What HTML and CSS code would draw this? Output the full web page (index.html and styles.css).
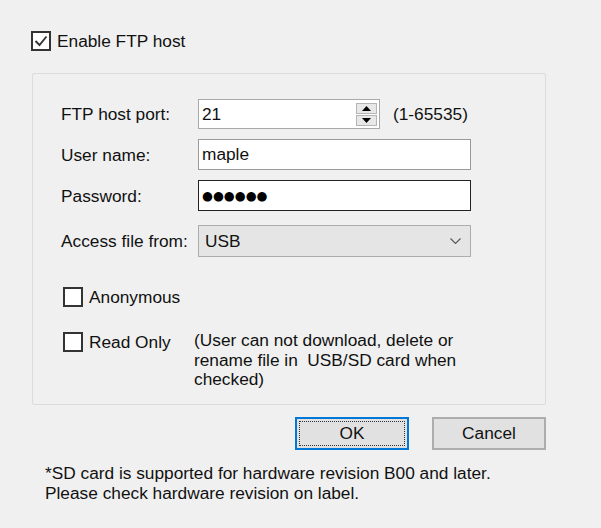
FILE: index.html
```html
<!DOCTYPE html>
<html>
<head>
<meta charset="utf-8">
<title>FTP host</title>
<link rel="stylesheet" href="styles.css">
</head>
<body>
<div class="dialog">
  <label class="check enable">
    <span class="box">
      <svg viewBox="0 0 16 16" width="16" height="16"><polyline points="2.5,8 6.5,12 13.5,3.5" fill="none" stroke="#333" stroke-width="1.9"/></svg>
    </span>
    <span class="check-text">Enable FTP host</span>
  </label>

  <div class="group">
    <div class="fields">
      <span class="label">FTP host port:</span>
      <div class="port-row">
        <div class="spin">
          <span class="value">21</span>
          <div class="spin-btns">
            <span class="spin-btn"><svg viewBox="0 0 9 5" width="9" height="5"><polygon points="0,5 4.5,0 9,5" fill="#000"/></svg></span>
            <span class="spin-btn"><svg viewBox="0 0 9 5" width="9" height="5"><polygon points="0,0 9,0 4.5,5" fill="#000"/></svg></span>
          </div>
        </div>
        <span class="range">(1-65535)</span>
      </div>

      <span class="label">User name:</span>
      <div class="input"><span class="value">maple</span></div>

      <span class="label">Password:</span>
      <div class="input focused"><span class="value dots">●●●●●●</span></div>

      <span class="label access-label">Access file from:</span>
      <div class="combo">
        <span class="value">USB</span>
        <svg class="chevron" viewBox="0 0 11 6" width="11" height="6"><polyline points="0.5,0.5 5.5,5.5 10.5,0.5" fill="none" stroke="#555" stroke-width="1.1"/></svg>
      </div>
    </div>

    <label class="check opt anon">
      <span class="box"></span>
      <span class="check-text">Anonymous</span>
    </label>

    <div class="opt readonly">
      <label class="check">
        <span class="box"></span>
        <span class="check-text">Read Only</span>
      </label>
      <p class="note">(User can not download, delete or<br>rename file in&nbsp; USB/SD card when<br>checked)</p>
    </div>
  </div>

  <div class="buttons">
    <button class="btn default"><span class="focus-rect">OK</span></button>
    <button class="btn">Cancel</button>
  </div>

  <p class="footnote">*SD card is supported for hardware revision B00 and later.<br>Please check hardware revision on label.</p>
</div>
</body>
</html>
```

FILE: styles.css
```css
html, body {
  margin: 0;
  padding: 0;
  background: #f0f0f0;
}

body {
  font-family: "Liberation Sans", Arial, sans-serif;
  font-size: 17.3px;
  color: #111;
  width: 601px;
  height: 528px;
  overflow: hidden;
}

.dialog {
  padding: 31px 0 0 31px;
  width: 515px;
}

/* checkboxes */
.check {
  display: flex;
  align-items: center;
}

.box {
  box-sizing: border-box;
  width: 20px;
  height: 20px;
  border: 2px solid #333;
  background: #fff;
  display: flex;
  align-items: center;
  justify-content: center;
  flex: none;
}

.check-text {
  margin-left: 6px;
  line-height: 20px;
}

/* group frame */
.group {
  box-sizing: border-box;
  margin-top: 22px;
  margin-left: 1px;
  width: 514px;
  height: 332px;
  border: 1px solid #dcdcdc;
  border-radius: 2px;
  padding: 25px 0 0 28px;
}

.fields {
  display: grid;
  grid-template-columns: 137px auto;
  row-gap: 10px;
  align-items: center;
}

.label {
  line-height: 20px;
}

.port-row {
  display: flex;
  align-items: center;
}

.range {
  margin-left: 13px;
}

.spin,
.input,
.combo {
  box-sizing: border-box;
  display: flex;
  align-items: center;
  background: #fff;
  border: 1px solid #a9a9a9;
}

.spin {
  width: 182px;
  height: 30px;
  padding-left: 3px;
}

.spin .value {
  flex: 1;
}

.spin-btns {
  display: flex;
  flex-direction: column;
  gap: 1px;
  margin-right: 2px;
}

.spin-btn {
  box-sizing: border-box;
  width: 21px;
  height: 11px;
  background: #e8e8e8;
  border: 1px solid #b5b5b5;
  display: flex;
  align-items: center;
  justify-content: center;
}

.input {
  width: 273px;
  height: 31px;
  padding-left: 3px;
  border-color: #9a9a9a;
}

.input.focused {
  border-color: #222;
}

.dots {
  font-family: "DejaVu Sans", sans-serif;
  font-size: 12.5px;
  letter-spacing: 0;
  color: #000;
}

.access-label,
.combo {
  margin-top: 4px;
}

.combo {
  width: 273px;
  height: 32px;
  padding: 0 9px 0 6px;
  background: #e5e5e5;
  border-color: #adadad;
  justify-content: space-between;
}

/* option rows */
.opt {
  margin-left: 2px;
}

.anon {
  margin-top: 30px;
}

.readonly {
  margin-top: 25px;
  display: flex;
  align-items: flex-start;
}

.readonly .check {
  margin-top: 0;
  width: 131px;
}

.note {
  margin: 0;
  line-height: 19.5px;
  margin-top: -1px;
}

/* buttons */
.buttons {
  display: flex;
  justify-content: flex-end;
  gap: 23px;
  margin-top: 12px;
  width: 515px;
}

.btn {
  box-sizing: border-box;
  width: 114px;
  height: 33px;
  font-family: inherit;
  font-size: 17.3px;
  color: #111;
  background: #e1e1e1;
  border: 2px solid #adadad;
  padding: 0;
  display: flex;
  align-items: center;
  justify-content: center;
}

.btn.default {
  border-color: #0078d7;
  padding: 2px;
}

.focus-rect {
  box-sizing: border-box;
  width: 100%;
  height: 100%;
  border: 1px dotted #333;
  display: flex;
  align-items: center;
  justify-content: center;
}

.footnote {
  margin: 13px 0 0 14px;
  line-height: 20px;
}
```
